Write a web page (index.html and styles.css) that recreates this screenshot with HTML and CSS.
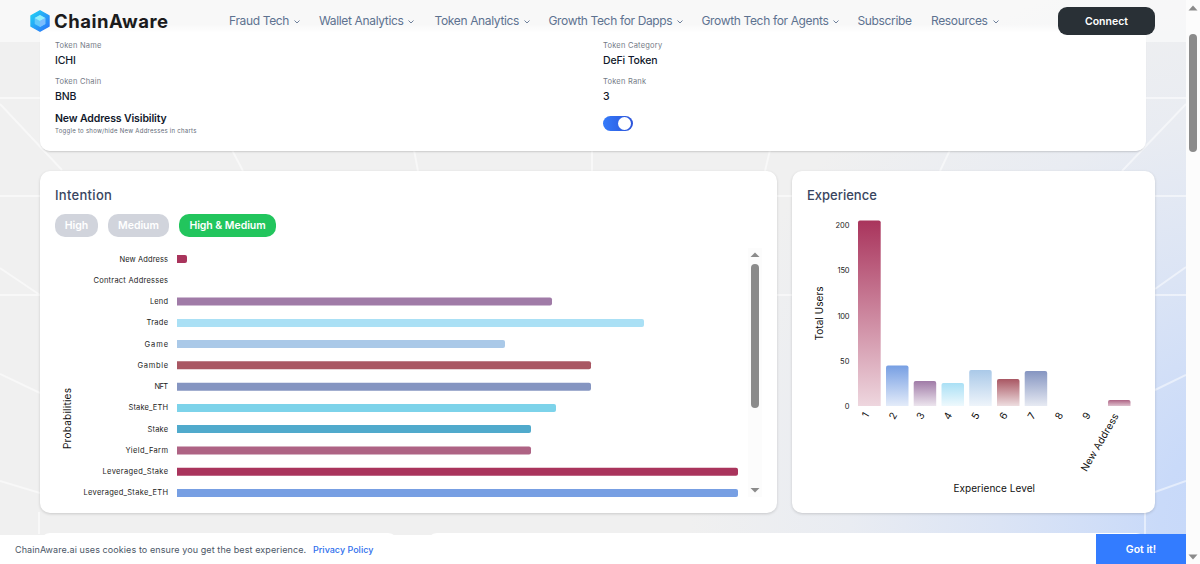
FILE: index.html
```html
<!DOCTYPE html>
<html lang="en">
<head>
    <meta charset="UTF-8">
    <meta name="viewport" content="width=device-width, initial-scale=1.0">
    <title>ChainAware - Token Analytics</title>
    <link rel="stylesheet" href="styles.css">
</head>
<body>
    <div class="page">
        <svg class="backdrop" viewBox="0 0 1186 564">
            <path d="M0 98H1186M0 196H1186M0 295H1186M0 104L62 170M0 268L40 295M0 374L40 393M0 481L40 493M39 512V534M232 150L243 171M414 150L418 171M592 150V171M770 150L765 171M950 150L940 171M1186 104L1122 171M1155 289L1186 267M1155 390L1186 375M1155 492L1186 481M1145 512V534"/>
        </svg>

        <header class="header">
            <div class="brand">
                <svg class="brand-icon" width="20" height="22" viewBox="0 0 20 22">
                    <defs>
                        <linearGradient id="cube" x1="0" y1="0" x2="1" y2="1">
                            <stop offset="0" stop-color="#20d4f4"/>
                            <stop offset="1" stop-color="#2c70fa"/>
                        </linearGradient>
                    </defs>
                    <path d="M10 .8L19 5.8V16.2L10 21.2L1 16.2V5.8Z" fill="url(#cube)" stroke="url(#cube)" stroke-width="1.4" stroke-linejoin="round"/>
                    <path d="M10 5L15.3 8V14L10 17L4.7 14V8Z" fill="#62c9fb"/>
                    <path d="M10 5L15.3 8L10 11L4.7 8Z" fill="#91effc"/>
                    <path d="M10 11L15.3 8V14L10 17Z" fill="#7bbcff"/>
                </svg>
                <span class="brand-name">ChainAware</span>
            </div>
            <nav class="nav">
                <a class="w-fraud"><span>Fraud Tech</span><svg class="chev" viewBox="0 0 6 4"><path d="M.5 .5L3 3L5.5 .5"/></svg></a>
                <a class="w-wallet"><span>Wallet Analytics</span><svg class="chev" viewBox="0 0 6 4"><path d="M.5 .5L3 3L5.5 .5"/></svg></a>
                <a class="w-token"><span>Token Analytics</span><svg class="chev" viewBox="0 0 6 4"><path d="M.5 .5L3 3L5.5 .5"/></svg></a>
                <a class="w-dapps"><span>Growth Tech for Dapps</span><svg class="chev" viewBox="0 0 6 4"><path d="M.5 .5L3 3L5.5 .5"/></svg></a>
                <a class="w-agents"><span>Growth Tech for Agents</span><svg class="chev" viewBox="0 0 6 4"><path d="M.5 .5L3 3L5.5 .5"/></svg></a>
                <a class="w-sub"><span>Subscribe</span></a>
                <a class="w-res"><span>Resources</span><svg class="chev" viewBox="0 0 6 4"><path d="M.5 .5L3 3L5.5 .5"/></svg></a>
            </nav>
            <button class="connect">Connect</button>
        </header>

        <main class="content">
            <section class="card token">
                <div class="field">
                    <div class="label">Token Name</div>
                    <div class="value">ICHI</div>
                </div>
                <div class="field">
                    <div class="label">Token Category</div>
                    <div class="value">DeFi Token</div>
                </div>
                <div class="field">
                    <div class="label">Token Chain</div>
                    <div class="value">BNB</div>
                </div>
                <div class="field">
                    <div class="label">Token Rank</div>
                    <div class="value">3</div>
                </div>
                <div class="visibility">
                    <div class="visibility-title">New Address Visibility</div>
                    <div class="visibility-hint">Toggle to show/hide New Addresses in charts</div>
                </div>
                <div class="toggle"><span class="knob"></span></div>
            </section>

            <div class="charts">
                <section class="card intention">
                    <h2>Intention</h2>
                    <div class="filters">
                        <button class="pill pill-high">High</button>
                        <button class="pill pill-medium">Medium</button>
                        <button class="pill pill-both active">High &amp; Medium</button>
                    </div>
                    <div class="chart-scroll">
                        <svg class="chart" width="693" height="250" viewBox="55 248 693 250">
                            <g class="names">
                                <text x="168" y="261.5" textLength="48.5">New Address</text>
                                <text x="168" y="282.8" textLength="74.5">Contract Addresses</text>
                                <text x="168" y="304" textLength="18">Lend</text>
                                <text x="168" y="325.3" textLength="21.5">Trade</text>
                                <text x="168" y="346.5" textLength="23.5">Game</text>
                                <text x="168" y="367.8" textLength="30.5">Gamble</text>
                                <text x="168" y="389" textLength="13.5">NFT</text>
                                <text x="168" y="410.3" textLength="39.5">Stake_ETH</text>
                                <text x="168" y="431.5" textLength="20.5">Stake</text>
                                <text x="168" y="452.8" textLength="42.5">Yield_Farm</text>
                                <text x="168" y="474" textLength="65.5">Leveraged_Stake</text>
                                <text x="168" y="495.3" textLength="84.5">Leveraged_Stake_ETH</text>
                            </g>
                            <path fill="#a9345c" d="M177 255h8q2 0 2 2v4q0 2-2 2h-8z"/>
                            <path fill="#a07ba7" d="M177 297.5h373q2 0 2 2v4q0 2-2 2h-373z"/>
                            <path fill="#aae0f5" d="M177 319h465q2 0 2 2v4q0 2-2 2h-465z"/>
                            <path fill="#aac9e8" d="M177 340h326q2 0 2 2v4q0 2-2 2h-326z"/>
                            <path fill="#a95763" d="M177 361.3h412q2 0 2 2v4q0 2-2 2h-412z"/>
                            <path fill="#8595c1" d="M177 382.7h412q2 0 2 2v4q0 2-2 2h-412z"/>
                            <path fill="#7dd3ea" d="M177 404h377q2 0 2 2v4q0 2-2 2h-377z"/>
                            <path fill="#50aacc" d="M177 425h352q2 0 2 2v4q0 2-2 2h-352z"/>
                            <path fill="#ae6384" d="M177 446.4h352q2 0 2 2v4q0 2-2 2h-352z"/>
                            <path fill="#a9345c" d="M177 467.7h559q2 0 2 2v4q0 2-2 2h-559z"/>
                            <path fill="#779fe3" d="M177 489h559q2 0 2 2v4q0 2-2 2h-559z"/>
                            <text class="axis" transform="translate(71 449) rotate(-90)" textLength="61">Probabilities</text>
                        </svg>
                        <div class="scrollbar inner">
                            <svg width="10" height="6" viewBox="0 0 10 6"><path d="M5 .5L9.5 5H.5Z"/></svg>
                            <span class="thumb"></span>
                            <svg width="10" height="6" viewBox="0 0 10 6"><path d="M5 5.5L9.5 1H.5Z"/></svg>
                        </div>
                    </div>
                </section>

                <section class="card experience">
                    <h2>Experience</h2>
                    <svg class="chart" width="333" height="290" viewBox="807 210 333 290">
                        <defs>
                            <linearGradient id="b1" x2="0" y2="1"><stop stop-color="#a9345c"/><stop offset="1" stop-color="#a9345c" stop-opacity=".2"/></linearGradient>
                            <linearGradient id="b2" x2="0" y2="1"><stop stop-color="#779fe3"/><stop offset="1" stop-color="#779fe3" stop-opacity=".2"/></linearGradient>
                            <linearGradient id="b3" x2="0" y2="1"><stop stop-color="#a07ba7"/><stop offset="1" stop-color="#a07ba7" stop-opacity=".2"/></linearGradient>
                            <linearGradient id="b4" x2="0" y2="1"><stop stop-color="#aae0f5"/><stop offset="1" stop-color="#aae0f5" stop-opacity=".2"/></linearGradient>
                            <linearGradient id="b5" x2="0" y2="1"><stop stop-color="#aac9e8"/><stop offset="1" stop-color="#aac9e8" stop-opacity=".2"/></linearGradient>
                            <linearGradient id="b6" x2="0" y2="1"><stop stop-color="#a95763"/><stop offset="1" stop-color="#a95763" stop-opacity=".2"/></linearGradient>
                            <linearGradient id="b7" x2="0" y2="1"><stop stop-color="#8595c1"/><stop offset="1" stop-color="#8595c1" stop-opacity=".2"/></linearGradient>
                            <linearGradient id="b8" x2="0" y2="1"><stop stop-color="#ae6384"/><stop offset="1" stop-color="#ae6384" stop-opacity=".4"/></linearGradient>
                        </defs>
                        <g class="names">
                            <text x="849.5" y="228" textLength="14">200</text>
                            <text x="849.5" y="273.3" textLength="12">150</text>
                            <text x="849.5" y="318.5" textLength="12">100</text>
                            <text x="849.5" y="363.5" textLength="9.5">50</text>
                            <text x="849.5" y="409">0</text>
                        </g>
                        <path fill="url(#b1)" d="M858 406V222.5q0-2 2-2h18.700q2 0 2 2V406z"/>
                        <path fill="url(#b2)" d="M886 406V367.500q0-2 2-2h18.500q2 0 2 2V406z"/>
                        <path fill="url(#b3)" d="M913.700 406V383q0-2 2-2h18.500q2 0 2 2V406z"/>
                        <path fill="url(#b4)" d="M941.500 406V385q0-2 2-2h18.500q2 0 2 2V406z"/>
                        <path fill="url(#b5)" d="M969.200 406V372q0-2 2-2h18.500q2 0 2 2V406z"/>
                        <path fill="url(#b6)" d="M997 406V381q0-2 2-2h18.500q2 0 2 2V406z"/>
                        <path fill="url(#b7)" d="M1024.700 406V373q0-2 2-2h18.500q2 0 2 2V406z"/>
                        <path fill="url(#b8)" d="M1108 406V402q0-2 2-2h18.500q2 0 2 2V406z"/>
                        <g class="levels">
                            <text transform="translate(869.5 415) rotate(-60)">1</text>
                            <text transform="translate(897.5 415) rotate(-60)">2</text>
                            <text transform="translate(925 415) rotate(-60)">3</text>
                            <text transform="translate(952.5 415) rotate(-60)">4</text>
                            <text transform="translate(980 415) rotate(-60)">5</text>
                            <text transform="translate(1008 415) rotate(-60)">6</text>
                            <text transform="translate(1036 415) rotate(-60)">7</text>
                            <text transform="translate(1063.500 415) rotate(-60)">8</text>
                            <text transform="translate(1091 415) rotate(-60)">9</text>
                            <text transform="translate(1119 416) rotate(-60)" textLength="65">New Address</text>
                        </g>
                        <text class="axis" transform="translate(822.5 340.500) rotate(-90)" textLength="54">Total Users</text>
                        <text class="axis" x="953.500" y="491.500" textLength="81.500">Experience Level</text>
                    </svg>
                </section>
            </div>

            <div class="next-row">
                <section class="next-card"></section>
                <section class="next-card wide"></section>
            </div>
        </main>

        <footer class="cookies">
            <p>ChainAware.ai uses cookies to ensure you get the best experience.</p>
            <a class="privacy">Privacy Policy</a>
            <button class="accept">Got it!</button>
        </footer>
    </div>

    <div class="scrollbar outer">
        <svg width="10" height="6" viewBox="0 0 10 6"><path d="M5 .5L9.5 5.5H.5Z"/></svg>
        <span class="thumb"></span>
        <svg width="10" height="6" viewBox="0 0 10 6"><path d="M5 5.5L9.5 .5H.5Z"/></svg>
    </div>
</body>
</html>
```
FILE: styles.css
```css
* {
    box-sizing: border-box;
}
body {
    margin: 0;
    height: 564px;
    display: flex;
    overflow: hidden;
    font-family: Inter, "Open Sans", sans-serif;
    background: #fff;
}
button {
    border: none;
    padding: 0;
    font-family: inherit;
    color: #fff;
    cursor: pointer;
}
.page {
    position: relative;
    width: 1186px;
    height: 564px;
    overflow: hidden;
    background: radial-gradient(circle at 1250px 520px, #c5d7fa 0, #c9daf9 90px, #dbe4f5 250px, #e9ecf2 400px, #f0f0f0 560px);
}
.backdrop {
    position: absolute;
    left: 0;
    top: 0;
    width: 1186px;
    height: 564px;
}
.backdrop path {
    fill: none;
    stroke: #fff;
    stroke-opacity: 0.5;
    stroke-width: 2;
}

/* header */
.header {
    position: absolute;
    left: 0;
    top: 0;
    z-index: 2;
    width: 100%;
    height: 42px;
    padding: 0 31px 0 29.5px;
    display: flex;
    align-items: center;
    background: rgba(255, 255, 255, 0.5);
}
.brand {
    width: 199.5px;
    display: flex;
    align-items: center;
    gap: 4.5px;
}
.brand-name {
    font-size: 18.5px;
    line-height: 22px;
    font-weight: 700;
    letter-spacing: 0.5px;
    color: #1b1b1c;
}
.nav {
    flex: 1;
    display: flex;
    font-size: 12px;
    line-height: 18px;
    letter-spacing: -0.35px;
    color: #5d7290;
}
.nav a {
    display: flex;
    align-items: center;
    gap: 5px;
    white-space: nowrap;
}
.w-fraud { width: 90px; }
.w-wallet { width: 115.5px; }
.w-token { width: 114px; }
.w-dapps { width: 153px; }
.w-agents { width: 156px; }
.w-sub { width: 73.5px; }
.chev {
    width: 6px;
    height: 4px;
    margin-top: 2px;
    fill: none;
    stroke: #5d7290;
    stroke-width: 0.9;
}
.connect {
    width: 97px;
    height: 28px;
    border-radius: 9px;
    background: #293036;
    font-size: 10.5px;
    font-weight: 600;
}

/* cards */
.content {
    position: relative;
    padding: 24px 31px 0 40px;
}
.card {
    background: #fff;
    border-radius: 10px;
    box-shadow: 0 1px 3px rgba(0, 0, 0, 0.16);
}
.token {
    width: 1106px;
    height: 127px;
    padding: 15px;
    display: grid;
    grid-template-columns: 548px 1fr;
    grid-template-rows: 36px 36px 1fr;
    background: linear-gradient(rgba(255, 255, 255, 0), #fff 9px);
    box-shadow: 0 2px 2px -1px rgba(0, 0, 0, 0.16);
}
.label {
    padding-top: 0.5px;
    font-size: 7.5px;
    line-height: 12px;
    letter-spacing: 0.22px;
    color: #747a86;
}
.value {
    margin-top: 1px;
    font-size: 10.5px;
    line-height: 16px;
    font-weight: 500;
    letter-spacing: -0.15px;
    color: #11182b;
}
.visibility-title {
    margin-top: 1px;
    font-size: 10.5px;
    line-height: 14px;
    font-weight: 600;
    letter-spacing: -0.12px;
    color: #11182b;
}
.visibility-hint {
    font-size: 6px;
    line-height: 10px;
    letter-spacing: 0.27px;
    color: #646b77;
}
.toggle {
    width: 30px;
    height: 15px;
    margin-top: 5px;
    padding: 1px 2px;
    display: flex;
    justify-content: flex-end;
    border-radius: 8px;
    background: linear-gradient(90deg, #347bfa, #2c53d9);
}
.knob {
    width: 13px;
    height: 13px;
    border-radius: 50%;
    background: #fff;
}
.charts {
    display: flex;
    gap: 15px;
    margin-top: 19.5px;
}
.intention {
    width: 737px;
    height: 342px;
    padding: 15px 15px 0;
}
.experience {
    width: 363px;
    height: 342px;
    padding: 15px 15px 0;
}
h2 {
    margin: 0;
    font-size: 13px;
    line-height: 19px;
    font-weight: 500;
    letter-spacing: 0.1px;
    color: #384560;
}
.intention h2 {
    letter-spacing: 0.3px;
}
.experience h2 {
    letter-spacing: 0;
}
.filters {
    display: flex;
    gap: 10px;
    margin-top: 9.5px;
}
.pill {
    height: 23px;
    border-radius: 10px;
    background: #d1d4dc;
    font-size: 10.5px;
    font-weight: 600;
    letter-spacing: -0.05px;
}
.pill.active {
    background: #22c55d;
}
.pill-high { width: 43px; }
.pill-medium { width: 61px; }
.pill-both { width: 97px; }
.chart-scroll {
    display: flex;
    margin-top: 10.5px;
}
.chart {
    display: block;
}
.experience .chart {
    margin-top: 5.5px;
}
.names text {
    font-size: 7.5px;
    text-anchor: end;
    fill: #222;
}
.axis {
    font-size: 10px;
    fill: #111;
}
.levels text {
    font-size: 10px;
    text-anchor: end;
    fill: #111;
}
.next-row {
    display: flex;
    gap: 29px;
    margin-top: 20px;
}
.next-card {
    width: 358px;
    height: 30px;
    border-radius: 10px 10px 0 0;
    background: #fff;
}
.next-card.wide {
    width: 719px;
}

/* scrollbars */
.scrollbar {
    display: flex;
    flex-direction: column;
    align-items: center;
    background: #fcfcfc;
}
.scrollbar svg path {
    fill: #8b8b8b;
}
.thumb {
    width: 8px;
    border-radius: 4px;
    background: #8b8b8b;
}
.scrollbar svg:last-child {
    margin-top: auto;
}
.inner {
    width: 14px;
    height: 249px;
    padding: 4px 0;
}
.inner .thumb {
    height: 144px;
    margin-top: 6px;
}
.outer {
    width: 14px;
    padding: 5px 0 4px;
}
.outer .thumb {
    height: 118px;
    margin-top: 23px;
}

/* cookie notice */
.cookies {
    position: absolute;
    left: 0;
    bottom: 0;
    z-index: 2;
    width: 100%;
    height: 29.5px;
    padding-left: 15px;
    display: flex;
    align-items: center;
    background: #fff;
    font-size: 9px;
    color: #4b5666;
}
.cookies p {
    width: 298px;
    margin: 0;
    letter-spacing: 0.09px;
    white-space: nowrap;
}
.privacy {
    font-weight: 500;
    color: #2f6fed;
}
.accept {
    width: 90px;
    height: 30px;
    margin-left: auto;
    background: #337cff;
    font-size: 10.5px;
    font-weight: 600;
}
```
